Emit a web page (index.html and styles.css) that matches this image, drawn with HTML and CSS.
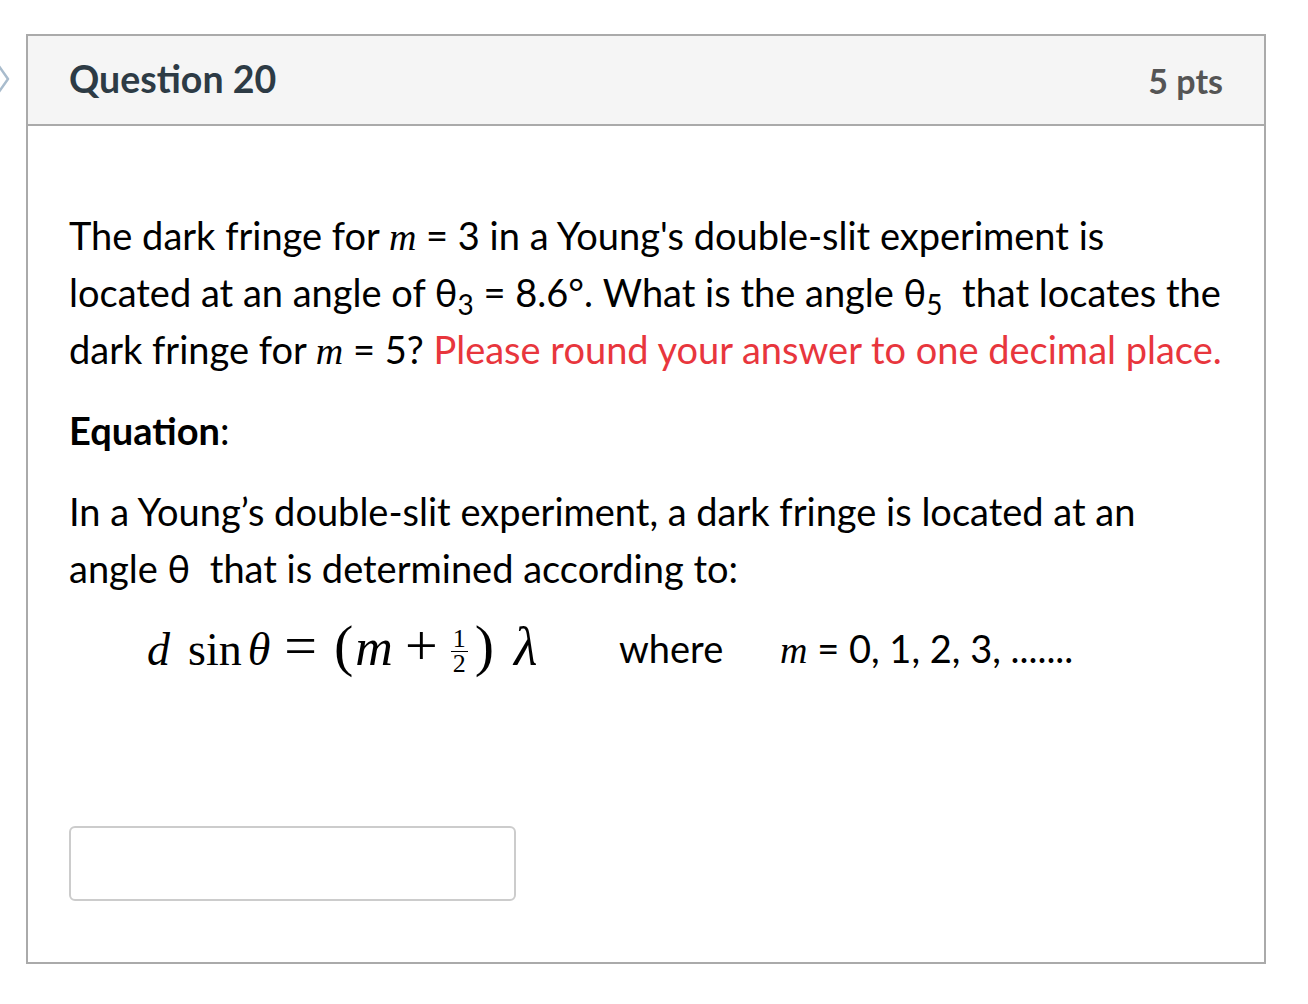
FILE: index.html
```html
<!DOCTYPE html>
<html>
<head>
<meta charset="utf-8">
<link rel="stylesheet" href="styles.css">
</head>
<body>
<div class="page">
  <svg class="flag" width="12" height="40" viewBox="0 0 12 40"><polyline points="-4,3 8,20 -4,37" fill="none" stroke="#a9bccd" stroke-width="2.5" stroke-linejoin="round"/></svg>
  <div class="card">
    <div class="header">
      <h2 class="title">Question 20</h2>
      <div class="pts">5 pts</div>
    </div>
    <div class="body">
      <p class="para">The dark fringe for <i class="mv">m</i> = 3 in a Young's double-slit experiment is located at an angle of θ<sub>3</sub> = 8.6°. What is the angle θ<sub>5</sub>&nbsp; that locates the dark fringe for <i class="mv">m</i> = 5? <span class="red">Please round your answer to one decimal place.</span></p>
      <p class="para"><b>Equation</b>:</p>
      <p class="para">In a Young’s double-slit experiment, a dark fringe is located at an angle θ&nbsp; that is determined according to:</p>
      <div class="eqline">
        <span class="math"><i class="d">d</i><span class="sin">sin</span><i class="th">θ</i><span class="op">=</span><span class="paren lp">(</span><i class="m">m</i><span class="op plus">+</span><span class="frac"><span class="num">1</span><span class="den">2</span></span><span class="paren rp">)</span><i class="lam">λ</i></span>
        <span class="where">where</span>
        <span class="mlist"><i class="mv">m</i> = 0, 1, 2, 3, .......</span>
      </div>
      <div class="answer"></div>
    </div>
  </div>
</div>
</body>
</html>
```

FILE: styles.css
```css
html, body {
  margin: 0;
  padding: 0;
  background: #ffffff;
}
body {
  font-family: Lato, "Open Sans", "Liberation Sans", sans-serif;
  color: #000;
}
.page {
  position: relative;
  padding: 34px 0 0 26px;
  width: 1240px;
}
.flag {
  position: absolute;
  left: 0;
  top: 59px;
}
.card {
  width: 1236px;
  border: 2px solid #aaaaaa;
}
.header {
  display: flex;
  justify-content: space-between;
  align-items: center;
  height: 88px;
  background: #f5f5f5;
  border-bottom: 2px solid #aaaaaa;
  padding: 0 41px 0 41px;
}
.title {
  margin: 0;
  font-size: 37.5px;
  font-weight: 700;
  color: #2d3b45;
  position: relative;
  top: -2px;
}
.pts {
  font-size: 34px;
  font-weight: 700;
  color: #555555;
}
.body {
  padding: 81px 41px 61px 41px;
}
.para {
  margin: 0 0 24px 0;
  font-size: 38px;
  line-height: 57px;
}
.para b {
  font-weight: 700;
}
.mv {
  font-family: "Liberation Serif", "Times New Roman", serif;
  font-style: italic;
  font-size: 38px;
  line-height: 0;
}
sub {
  font-size: 28px;
  line-height: 0;
  vertical-align: baseline;
  position: relative;
  top: 8px;
}
.red {
  color: #e8363d;
}
.eqline {
  display: flex;
  align-items: center;
  height: 57px;
  margin-bottom: 148px;
  font-size: 38px;
  position: relative;
  top: -2px;
}
.math {
  display: inline-flex;
  align-items: baseline;
  margin-left: 78px;
  font-family: "Liberation Serif", "Times New Roman", serif;
  font-size: 46px;
  line-height: 1;
  width: 472px;
  position: relative;
  top: -2px;
}
.math i {
  font-style: italic;
}
.d {
  margin-right: 18px;
}
.th {
  margin-left: 6px;
}
.op {
  font-size: 58px;
  margin-left: 14px;
}
.lp {
  margin-left: 17px;
}
.paren {
  font-size: 58px;
  font-weight: 400;
}
.m {
  font-size: 52px;
  margin-left: 2px;
}
.plus {
  margin-left: 12px;
}
.frac {
  display: inline-flex;
  flex-direction: column;
  align-items: center;
  align-self: center;
  font-size: 26px;
  line-height: 24px;
  margin-left: 13px;
  position: relative;
  top: 6px;
}
.num {
  border-bottom: 1.5px solid #000;
  padding: 0 2px;
}
.den {
  padding: 0 2px;
}
.rp {
  margin-left: 7px;
}
.lam {
  font-size: 54px;
  margin-left: 20px;
}
.where {
  width: 161px;
}
.mlist {
  white-space: nowrap;
}
.answer {
  width: 443px;
  height: 71px;
  border: 2px solid #cccccc;
  border-radius: 6px;
}
```
